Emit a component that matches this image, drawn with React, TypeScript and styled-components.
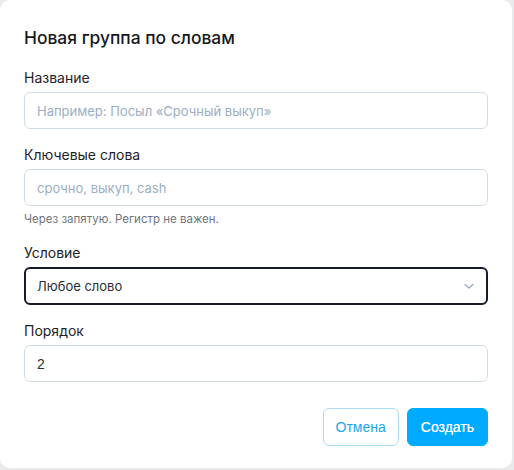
import styled, { createGlobalStyle } from "styled-components";

const GlobalStyle = createGlobalStyle`
  html, body {
    margin: 0;
    padding: 0;
    background: #e9eaec;
  }
  * {
    box-sizing: border-box;
  }
`;

const Dialog = styled.div`
  width: 512px;
  height: 468px;
  background: #ffffff;
  border-radius: 10px;
  padding: 24px 24px 0;
  font-family: Inter, "Noto Sans", sans-serif;
  color: #1f2328;
`;

const Title = styled.h2`
  margin: 0 0 16px;
  font-size: 17.4px;
  line-height: 28px;
  font-weight: 500;
  color: #15181d;
`;

const Form = styled.div`
  display: flex;
  flex-direction: column;
  gap: 16px;
`;

const Field = styled.div`
  display: flex;
  flex-direction: column;
  gap: 4px;
`;

const Label = styled.label`
  font-size: 14px;
  line-height: 20px;
  color: #1f2328;
`;

const Input = styled.input<{ $mono?: boolean }>`
  height: 37px;
  width: 100%;
  border: 1px solid #cfdce8;
  border-radius: 6px;
  padding: 0 12px;
  font-family: ${({ $mono }) =>
    $mono ? '"Liberation Sans", Arial, sans-serif' : 'Inter, "Noto Sans", sans-serif'};
  font-size: ${({ $mono }) => ($mono ? "14px" : "13px")};
  color: #2a2e33;
  background: #fff;
  outline: none;

  &::placeholder {
    color: #9aaec4;
  }
`;

const Hint = styled.div`
  margin-top: 1px;
  font-size: 11.5px;
  line-height: 16px;
  color: #6f757c;
`;

const Select = styled.div`
  height: 38px;
  border: 2px solid #151b2c;
  border-radius: 6px;
  padding: 0 11px;
  display: flex;
  align-items: center;
  justify-content: space-between;
  font-size: 13px;
  color: #2a2e33;
`;

const Actions = styled.div`
  margin-top: 26px;
  display: flex;
  justify-content: flex-end;
  gap: 8px;
`;

const Button = styled.button<{ $primary?: boolean }>`
  height: 38px;
  padding: 0 ${({ $primary }) => ($primary ? "13px" : "12px")};
  border-radius: 6px;
  font-family: "Liberation Sans", Arial, sans-serif;
  font-size: 14px;
  cursor: pointer;
  border: 1px solid ${({ $primary }) => ($primary ? "#00aaff" : "#a9dcf7")};
  background: ${({ $primary }) => ($primary ? "#00aaff" : "#ffffff")};
  color: ${({ $primary }) => ($primary ? "#ffffff" : "#1aa7ec")};
  font-weight: 400;
  text-shadow: ${({ $primary }) => ($primary ? "0 0 0.4px #ffffff" : "none")};
`;

const Chevron = () => (
  <svg width="12" height="12" viewBox="0 0 12 12" fill="none">
    <path d="M2 4.5l4 3.5 4-3.5" stroke="#9aaac0" strokeWidth="1.3" strokeLinecap="round" strokeLinejoin="round" />
  </svg>
);

export default function App() {
  return (
    <>
      <GlobalStyle />
      <Dialog>
        <Title>Новая группа по словам</Title>
        <Form>
          <Field>
            <Label>Название</Label>
            <Input placeholder="Например: Посыл «Срочный выкуп»" />
          </Field>
          <Field>
            <Label>Ключевые слова</Label>
            <Input placeholder="срочно, выкуп, cash" />
            <Hint>Через запятую. Регистр не важен.</Hint>
          </Field>
          <Field>
            <Label>Условие</Label>
            <Select>
              <span>Любое слово</span>
              <Chevron />
            </Select>
          </Field>
          <Field>
            <Label>Порядок</Label>
            <Input $mono defaultValue="2" />
          </Field>
        </Form>
        <Actions>
          <Button>Отмена</Button>
          <Button $primary>Создать</Button>
        </Actions>
      </Dialog>
    </>
  );
}
